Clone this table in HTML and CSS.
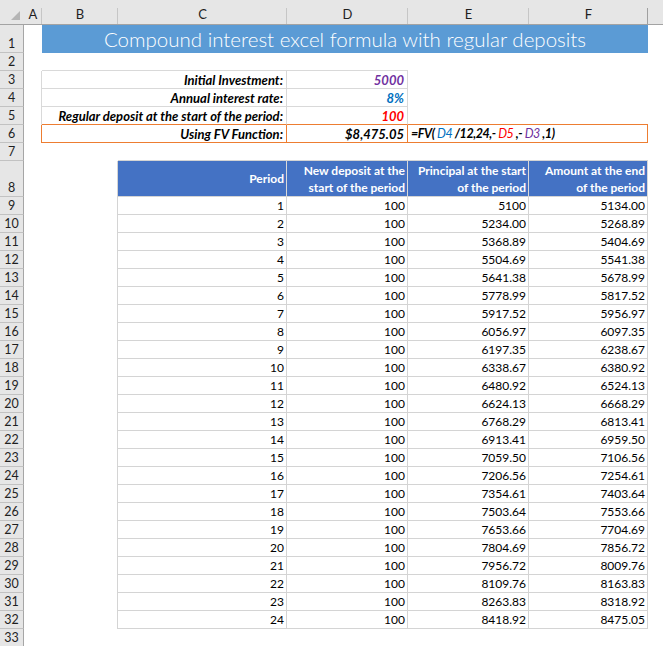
FILE: index.html
```html
<!DOCTYPE html>
<html>
<head>
<meta charset="utf-8">
<link rel="stylesheet" href="styles.css">
</head>
<body>
<div class="sheet">
  <div class="row colhead">
    <div class="corner"><svg width="24" height="24" viewBox="0 0 24 24"><polygon points="20,11 20,20 11,20" fill="#b5b5b5"/></svg></div>
    <div class="ch">A</div><div class="ch">B</div><div class="ch">C</div><div class="ch">D</div><div class="ch">E</div><div class="ch last">F</div><div class="ch end"></div>
  </div>

  <div class="row r-title">
    <div class="rh">1</div><div></div>
    <div class="title span5">Compound interest excel formula with regular deposits</div>
    <div></div>
  </div>

  <div class="row">
    <div class="rh">2</div><div></div>
    <div class="span2 bb-g"></div><div class="bb-g"></div><div class="span2"></div><div></div>
  </div>

  <div class="row">
    <div class="rh">3</div><div class="br-g"></div>
    <div class="span2 lbl box-g">Initial Investment:</div>
    <div class="val box-g purple">5000</div>
    <div class="span2"></div><div></div>
  </div>
  <div class="row">
    <div class="rh">4</div><div class="br-g"></div>
    <div class="span2 lbl box-g">Annual interest rate:</div>
    <div class="val box-g blue">8%</div>
    <div class="span2"></div><div></div>
  </div>
  <div class="row">
    <div class="rh">5</div><div class="br-g"></div>
    <div class="span2 lbl br-g bb-o">Regular deposit at the start of the period:</div>
    <div class="val br-g bb-o red">100</div>
    <div class="span2 bb-o"></div><div></div>
  </div>
  <div class="row">
    <div class="rh">6</div><div class="br-o"></div>
    <div class="span2 lbl box-o">Using FV Function:</div>
    <div class="val box-o black">$8,475.05</div>
    <div class="span2 formula box-o"><span class="fb">=FV(</span><span class="ref blue"> D4 </span><span class="fb">/12,24,-</span><span class="ref red"> D5 </span><span class="fb">,-</span><span class="ref purple"> D3 </span><span class="fb">,1)</span></div>
    <div></div>
  </div>

  <div class="row">
    <div class="rh">7</div><div></div><div></div>
    <div class="bb-t"></div><div class="bb-t"></div><div class="bb-t"></div><div class="bb-t"></div><div></div>
  </div>

  <div class="row r-head">
    <div class="rh">8</div><div></div><div class="br-t"></div>
    <div class="th">Period</div>
    <div class="th">New deposit at the<br>start of the period</div>
    <div class="th">Principal at the start<br>of the period</div>
    <div class="th">Amount at the end<br>of the period</div>
    <div></div>
  </div>

  <div class="row"><div class="rh">9</div><div></div><div class="br-t"></div><div class="td">1</div><div class="td">100</div><div class="td">5100</div><div class="td">5134.00</div><div></div></div>
  <div class="row"><div class="rh">10</div><div></div><div class="br-t"></div><div class="td">2</div><div class="td">100</div><div class="td">5234.00</div><div class="td">5268.89</div><div></div></div>
  <div class="row"><div class="rh">11</div><div></div><div class="br-t"></div><div class="td">3</div><div class="td">100</div><div class="td">5368.89</div><div class="td">5404.69</div><div></div></div>
  <div class="row"><div class="rh">12</div><div></div><div class="br-t"></div><div class="td">4</div><div class="td">100</div><div class="td">5504.69</div><div class="td">5541.38</div><div></div></div>
  <div class="row"><div class="rh">13</div><div></div><div class="br-t"></div><div class="td">5</div><div class="td">100</div><div class="td">5641.38</div><div class="td">5678.99</div><div></div></div>
  <div class="row"><div class="rh">14</div><div></div><div class="br-t"></div><div class="td">6</div><div class="td">100</div><div class="td">5778.99</div><div class="td">5817.52</div><div></div></div>
  <div class="row"><div class="rh">15</div><div></div><div class="br-t"></div><div class="td">7</div><div class="td">100</div><div class="td">5917.52</div><div class="td">5956.97</div><div></div></div>
  <div class="row"><div class="rh">16</div><div></div><div class="br-t"></div><div class="td">8</div><div class="td">100</div><div class="td">6056.97</div><div class="td">6097.35</div><div></div></div>
  <div class="row"><div class="rh">17</div><div></div><div class="br-t"></div><div class="td">9</div><div class="td">100</div><div class="td">6197.35</div><div class="td">6238.67</div><div></div></div>
  <div class="row"><div class="rh">18</div><div></div><div class="br-t"></div><div class="td">10</div><div class="td">100</div><div class="td">6338.67</div><div class="td">6380.92</div><div></div></div>
  <div class="row"><div class="rh">19</div><div></div><div class="br-t"></div><div class="td">11</div><div class="td">100</div><div class="td">6480.92</div><div class="td">6524.13</div><div></div></div>
  <div class="row"><div class="rh">20</div><div></div><div class="br-t"></div><div class="td">12</div><div class="td">100</div><div class="td">6624.13</div><div class="td">6668.29</div><div></div></div>
  <div class="row"><div class="rh">21</div><div></div><div class="br-t"></div><div class="td">13</div><div class="td">100</div><div class="td">6768.29</div><div class="td">6813.41</div><div></div></div>
  <div class="row"><div class="rh">22</div><div></div><div class="br-t"></div><div class="td">14</div><div class="td">100</div><div class="td">6913.41</div><div class="td">6959.50</div><div></div></div>
  <div class="row"><div class="rh">23</div><div></div><div class="br-t"></div><div class="td">15</div><div class="td">100</div><div class="td">7059.50</div><div class="td">7106.56</div><div></div></div>
  <div class="row"><div class="rh">24</div><div></div><div class="br-t"></div><div class="td">16</div><div class="td">100</div><div class="td">7206.56</div><div class="td">7254.61</div><div></div></div>
  <div class="row"><div class="rh">25</div><div></div><div class="br-t"></div><div class="td">17</div><div class="td">100</div><div class="td">7354.61</div><div class="td">7403.64</div><div></div></div>
  <div class="row"><div class="rh">26</div><div></div><div class="br-t"></div><div class="td">18</div><div class="td">100</div><div class="td">7503.64</div><div class="td">7553.66</div><div></div></div>
  <div class="row"><div class="rh">27</div><div></div><div class="br-t"></div><div class="td">19</div><div class="td">100</div><div class="td">7653.66</div><div class="td">7704.69</div><div></div></div>
  <div class="row"><div class="rh">28</div><div></div><div class="br-t"></div><div class="td">20</div><div class="td">100</div><div class="td">7804.69</div><div class="td">7856.72</div><div></div></div>
  <div class="row"><div class="rh">29</div><div></div><div class="br-t"></div><div class="td">21</div><div class="td">100</div><div class="td">7956.72</div><div class="td">8009.76</div><div></div></div>
  <div class="row"><div class="rh">30</div><div></div><div class="br-t"></div><div class="td">22</div><div class="td">100</div><div class="td">8109.76</div><div class="td">8163.83</div><div></div></div>
  <div class="row"><div class="rh">31</div><div></div><div class="br-t"></div><div class="td">23</div><div class="td">100</div><div class="td">8263.83</div><div class="td">8318.92</div><div></div></div>
  <div class="row"><div class="rh">32</div><div></div><div class="br-t"></div><div class="td">24</div><div class="td">100</div><div class="td">8418.92</div><div class="td">8475.05</div><div></div></div>
  <div class="row"><div class="rh">33</div><div></div><div></div><div></div><div></div><div></div><div></div><div></div></div>
</div>
</body>
</html>
```

FILE: styles.css
```css
html, body {
  margin: 0;
  padding: 0;
  background: #ffffff;
}

body {
  font-family: "Lato", "Liberation Sans", sans-serif;
  font-size: 12px;
  color: #000000;
  overflow: hidden;
}

.sheet {
  width: 663px;
}

.row {
  display: grid;
  grid-template-columns: 24px 18px 76px 169px 121px 121px 119px 1fr;
  height: 18px;
}

.row > div {
  box-sizing: border-box;
  display: flex;
  align-items: center;
  min-width: 0;
  white-space: nowrap;
}

.span2 { grid-column: span 2; }
.span5 { grid-column: span 5; }

/* column headers */
.colhead {
  height: 25px;
}

.colhead > div {
  background: #e6e6e6;
  border-bottom: 1px solid #a3a3a3;
}

.corner {
  background: #e6e6e6;
}

.corner svg {
  display: block;
}

.ch {
  justify-content: center;
  align-items: flex-end !important;
  padding-bottom: 3px;
  font-size: 13px;
  line-height: 14px;
  color: #1f1f1f;
  background:
    linear-gradient(to left, #c6c6c6 1px, transparent 1px) right bottom / 100% 16px no-repeat,
    #e6e6e6 !important;
}

.ch.last {
  background:
    linear-gradient(to left, #a0a0a0 1px, transparent 1px) right bottom / 100% 16px no-repeat,
    #e6e6e6 !important;
}

.ch.end {
  background: #e6e6e6 !important;
}

/* row headers */
.rh {
  background: #e6e6e6;
  border-right: 1px solid #a6a6a6;
  border-bottom: 1px solid #c2c2c2;
  justify-content: center;
  align-items: flex-end !important;
  padding-bottom: 1px;
  font-size: 12.5px;
  line-height: 14px;
  color: #1f1f1f;
}

/* title */
.r-title {
  height: 28px;
}

.title {
  background: #5b9bd5;
  color: #ffffff;
  justify-content: center;
  font-weight: 300;
  font-size: 20.5px;
}

/* borders */
.bb-g { border-bottom: 1px solid #d9d9d9; }
.br-g { border-right: 1px solid #d9d9d9; }
.box-g {
  border-right: 1px solid #d9d9d9;
  border-bottom: 1px solid #d9d9d9;
}
.bb-o { border-bottom: 1px solid #ed7d31; }
.br-o { border-right: 1px solid #ed7d31; }
.box-o {
  border-right: 1px solid #ed7d31;
  border-bottom: 1px solid #ed7d31;
}
.bb-t { border-bottom: 1px solid #d4d4d4; }
.br-t { border-right: 1px solid #d4d4d4; }

/* summary block */
.lbl {
  justify-content: flex-end;
  padding-right: 3px;
  font-size: 13px;
  font-weight: 700;
  font-style: italic;
}

.val {
  justify-content: flex-end;
  padding-right: 3px;
  font-size: 13px;
  font-weight: 700;
  font-style: italic;
}

.formula {
  justify-content: flex-start;
  padding-left: 3px;
  font-size: 12.5px;
  letter-spacing: -0.45px;
  font-style: italic;
  white-space: pre !important;
}

.fb { font-weight: 700; }
.ref { font-weight: 400; }

.purple { color: #7030a0; }
.blue { color: #0070c0; }
.red { color: #ff0000; }
.black { color: #000000; }

/* data table */
.r-head {
  height: 36px;
}

.th {
  background: #4472c4;
  color: #ffffff;
  font-weight: 700;
  line-height: 17px;
  text-align: right;
  justify-content: flex-end;
  padding-right: 2px;
  border-right: 1px solid #d9d9d9;
  border-bottom: 1px solid #d4d4d4;
}

.td {
  justify-content: flex-end;
  padding-right: 2px;
  border-right: 1px solid #d4d4d4;
  border-bottom: 1px solid #d4d4d4;
}
```
